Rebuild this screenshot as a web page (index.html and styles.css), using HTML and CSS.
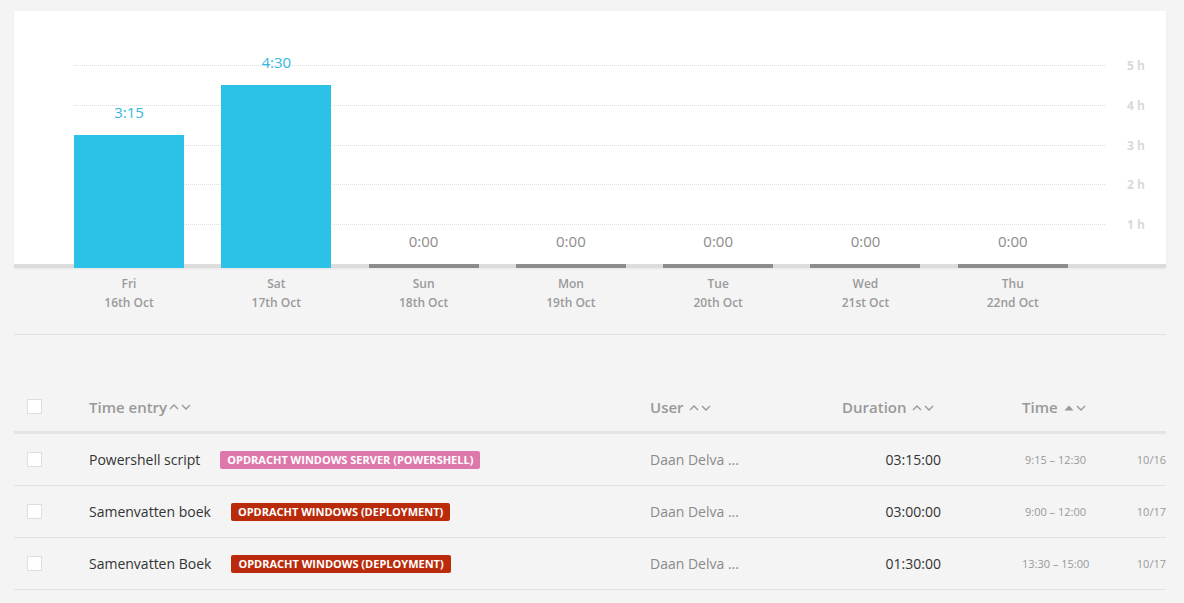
FILE: index.html
```html
<!DOCTYPE html>
<html>
<head>
<meta charset="utf-8">
<link rel="stylesheet" href="styles.css">
</head>
<body>
<div class="page">
  <section class="chart">
    <div class="grid-lines">
      <div class="gl" style="top:54px"><span>5 h</span></div>
      <div class="gl" style="top:94px"><span>4 h</span></div>
      <div class="gl" style="top:134px"><span>3 h</span></div>
      <div class="gl" style="top:173px"><span>2 h</span></div>
      <div class="gl" style="top:213px"><span>1 h</span></div>
    </div>
    <div class="cols">
      <div class="col"><div class="val active">3:15</div><div class="bar active" style="height:133px"></div></div>
      <div class="col"><div class="val active">4:30</div><div class="bar active" style="height:183px"></div></div>
      <div class="col"><div class="val">0:00</div><div class="bar zero"></div></div>
      <div class="col"><div class="val">0:00</div><div class="bar zero"></div></div>
      <div class="col"><div class="val">0:00</div><div class="bar zero"></div></div>
      <div class="col"><div class="val">0:00</div><div class="bar zero"></div></div>
      <div class="col"><div class="val">0:00</div><div class="bar zero"></div></div>
    </div>
  </section>
  <div class="days">
    <div class="day">Fri<br>16th Oct</div>
    <div class="day">Sat<br>17th Oct</div>
    <div class="day">Sun<br>18th Oct</div>
    <div class="day">Mon<br>19th Oct</div>
    <div class="day">Tue<br>20th Oct</div>
    <div class="day">Wed<br>21st Oct</div>
    <div class="day">Thu<br>22nd Oct</div>
  </div>
  <div class="sep"></div>

  <div class="table">
    <div class="row head">
      <div class="c-check"><span class="box"></span></div>
      <div class="c-entry">Time entry<svg class="sort" viewBox="0 0 22 10" width="22" height="10"><path d="M1 7 L5 3 L9 7 M13 3 L17 7 L21 3" fill="none" stroke="#999" stroke-width="1.4"/></svg></div>
      <div class="c-user">User <svg class="sort" viewBox="0 0 22 10" width="22" height="10"><path d="M1 7 L5 3 L9 7 M13 3 L17 7 L21 3" fill="none" stroke="#999" stroke-width="1.4"/></svg></div>
      <div class="c-dur-h">Duration <svg class="sort" viewBox="0 0 22 10" width="22" height="10"><path d="M1 7 L5 3 L9 7 M13 3 L17 7 L21 3" fill="none" stroke="#999" stroke-width="1.4"/></svg></div>
      <div class="c-gap"></div>
      <div class="c-time-h">Time <svg class="sort" viewBox="0 0 22 10" width="22" height="10"><path d="M0.5 7.5 L5 2.5 L9.5 7.5 Z" fill="#999"/><path d="M13 3 L17 7 L21 3" fill="none" stroke="#999" stroke-width="1.4"/></svg></div>
      <div class="c-date"></div>
    </div>

    <div class="row">
      <div class="c-check"><span class="box"></span></div>
      <div class="c-entry"><span class="name">Powershell script</span><span class="tag pink">Opdracht Windows Server (Powershell)</span></div>
      <div class="c-user">Daan Delva ...</div>
      <div class="c-dur">03:15:00</div>
      <div class="c-gap"></div>
      <div class="c-time">9:15 – 12:30</div>
      <div class="c-date">10/16</div>
    </div>
    <div class="row">
      <div class="c-check"><span class="box"></span></div>
      <div class="c-entry"><span class="name">Samenvatten boek</span><span class="tag red">Opdracht Windows (Deployment)</span></div>
      <div class="c-user">Daan Delva ...</div>
      <div class="c-dur">03:00:00</div>
      <div class="c-gap"></div>
      <div class="c-time">9:00 – 12:00</div>
      <div class="c-date">10/17</div>
    </div>
    <div class="row">
      <div class="c-check"><span class="box"></span></div>
      <div class="c-entry"><span class="name">Samenvatten Boek</span><span class="tag red">Opdracht Windows (Deployment)</span></div>
      <div class="c-user">Daan Delva ...</div>
      <div class="c-dur">01:30:00</div>
      <div class="c-gap"></div>
      <div class="c-time">13:30 – 15:00</div>
      <div class="c-date">10/17</div>
    </div>
  </div>
</div>
</body>
</html>
```

FILE: styles.css
```css
* { box-sizing: border-box; }
html, body { margin: 0; padding: 0; }
body {
  background: #f4f4f4;
  font-family: "Open Sans", "Noto Sans", sans-serif;
  color: #333;
  overflow: hidden;
}
.page {
  width: 1184px;
  padding: 11px 18px 0 14px;
}
.chart {
  position: relative;
  background: #fff;
  height: 257px;
  box-shadow: inset 0 -4px 0 #dcdcdc, 0 1px 2px rgba(0,0,0,0.06);
  padding-left: 60px;
}
.grid-lines {
  position: absolute;
  left: 60px;
  top: 0;
  width: 1031px;
  height: 100%;
}
.gl {
  position: absolute;
  left: 0;
  width: 1031px;
  height: 0;
  border-top: 1px dotted #dedede;
}
.gl span {
  position: absolute;
  left: 1053px;
  top: -9px;
  line-height: 18px;
  font-size: 12px;
  font-weight: 700;
  color: #d9d9d9;
  white-space: nowrap;
}
.cols {
  position: relative;
  display: grid;
  grid-template-columns: repeat(7, 110px);
  column-gap: 37.3px;
  height: 257px;
}
.col {
  display: flex;
  flex-direction: column;
  justify-content: flex-end;
  align-items: stretch;
}
.val {
  text-align: center;
  font-size: 15px;
  line-height: 20px;
  margin-bottom: 13px;
  color: #8c8c8c;
}
.val.active { color: #35b8e2; font-weight: 500; }
.bar.active { background: #2cc2e7; }
.bar.zero { height: 4px; background: #8c8c8c; }

.days {
  display: grid;
  grid-template-columns: repeat(7, 110px);
  column-gap: 37.3px;
  padding-left: 60px;
  padding-top: 6px;
}
.day {
  text-align: center;
  font-size: 12px;
  line-height: 19px;
  font-weight: 600;
  color: #9a9a9a;
}
.sep {
  margin-top: 22px;
  border-top: 1px solid #e1e1e1;
}

.table { margin-top: 47px; }
.row {
  display: grid;
  grid-template-columns: 75px 561px 192px 100px 80px 64px 80px;
  align-items: center;
  height: 52px;
  border-bottom: 1px solid #e2e2e2;
  font-size: 14px;
}
.row.head {
  height: 52px;
  border-bottom: 3px solid #e4e4e4;
  font-size: 15px;
  font-weight: 600;
  color: #999;
}
.c-check { padding-left: 13px; display: flex; align-items: center; }
.box {
  display: block;
  width: 15px;
  height: 15px;
  background: #fff;
  border: 1px solid #dedede;
}
.c-entry { display: flex; align-items: center; white-space: nowrap; }
.sort { margin-left: 2px; vertical-align: middle; }
.name { color: #333; }
.tag {
  margin-left: 20px;
  height: 18px;
  line-height: 18px;
  padding: 0 7px;
  border-radius: 2px;
  color: #fff;
  font-size: 11px;
  font-weight: 700;
  text-transform: uppercase;
}
.tag.pink { background: #de78ab; }
.tag.red { background: #b92b0a; }
.c-user { color: #8a8a8a; white-space: nowrap; }
.row.head .c-user { color: #999; }
.c-dur { text-align: right; color: #333; padding-right: 1px; }
.c-dur-h, .c-time-h { white-space: nowrap; }
.c-time { text-align: right; font-size: 11px; color: #999; white-space: nowrap; direction: rtl; unicode-bidi: plaintext; }
.c-date { text-align: right; font-size: 11px; color: #999; }
```
